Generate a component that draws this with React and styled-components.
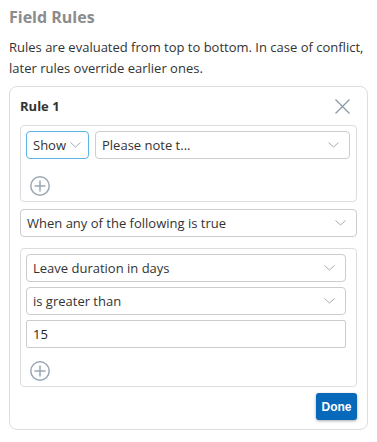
import styled, { createGlobalStyle } from "styled-components";

const GlobalStyle = createGlobalStyle`
  body {
    margin: 0;
    font-family: "Open Sans", "Liberation Sans", sans-serif;
    color: #333;
    background: #fff;
  }
`;

const Page = styled.div`
  padding: 6px 9px 0 9px;
  width: 359px;
`;

const Title = styled.h2`
  margin: 0;
  font-size: 16px;
  line-height: 22px;
  font-weight: 700;
  color: #8c8c8c;
`;

const Description = styled.p`
  margin: 9px 0 0 0;
  font-size: 13px;
  line-height: 21px;
  color: #333;
`;

const Card = styled.section`
  margin-top: 7px;
  border: 1px solid #ddd;
  border-radius: 8px;
  padding: 0 10px 9px 10px;
  display: flex;
  flex-direction: column;
`;

const CardHeader = styled.div`
  height: 38px;
  display: flex;
  align-items: center;
  justify-content: space-between;
`;

const RuleTitle = styled.h3`
  margin: 0;
  font-size: 13px;
  font-weight: 700;
  color: #333;
`;

const CloseButton = styled.button`
  border: none;
  background: none;
  padding: 0;
  margin-right: 7px;
  display: flex;
  cursor: pointer;
`;

const Group = styled.div`
  border: 1px solid #ddd;
  border-radius: 4px;
  padding: 5px ${(p) => (p.$wide ? 10 : 6)}px 5px 5px;
  display: flex;
  flex-direction: column;
  gap: 5px;
  margin-bottom: ${(p) => p.$mb || 0}px;
`;

const Row = styled.div`
  display: flex;
  gap: 6px;
`;

const Select = styled.div`
  height: 28px;
  box-sizing: border-box;
  border: 1px solid ${(p) => (p.$focus ? "#5cb4e4" : "#ccc")};
  border-radius: 4px;
  display: flex;
  align-items: center;
  justify-content: space-between;
  padding: 0 ${(p) => (p.$focus ? 7 : 10)}px 0 6px;
  gap: ${(p) => (p.$focus ? 4 : 6)}px;
  font-size: 13px;
  color: #333;
  flex: ${(p) => (p.$grow ? 1 : "none")};
  background: #fff;
  margin-bottom: ${(p) => p.$mb || 0}px;
`;

const Input = styled.div`
  height: 28px;
  box-sizing: border-box;
  border: 1px solid #ccc;
  border-radius: 2px;
  display: flex;
  align-items: center;
  padding: 0 6px;
  font-size: 13px;
  color: #222;
`;

const AddButton = styled.button`
  border: none;
  background: none;
  padding: 0;
  margin: ${(p) => p.$mt}px 0 0 4px;
  display: flex;
  align-self: flex-start;
  cursor: pointer;
`;

const Footer = styled.div`
  display: flex;
  justify-content: flex-end;
  margin-top: 6px;
`;

const DoneButton = styled.button`
  font-family: "Liberation Sans", Arial, sans-serif;
  font-weight: 700;
  font-size: 12px;
  color: #fff;
  background: #0868ba;
  border: none;
  border-radius: 3px;
  height: 27px;
  width: 41px;
  padding: 0;
  box-shadow: 0 1px 3px rgba(0, 0, 0, 0.35);
`;

const Chevron = () => (
  <svg width="11" height="6" viewBox="0 0 11 6" fill="none">
    <path d="M0.5 0.5L5.5 5L10.5 0.5" stroke="#a3acb5" strokeWidth="1" />
  </svg>
);

const CloseIcon = () => (
  <svg width="15" height="15" viewBox="0 0 15 15" fill="none">
    <path d="M0.5 0.5L14.5 14.5M14.5 0.5L0.5 14.5" stroke="#8a9aa8" strokeWidth="1.3" />
  </svg>
);

const PlusIcon = () => (
  <svg width="20" height="20" viewBox="0 0 20 20" fill="none">
    <circle cx="10" cy="10" r="9.2" stroke="#9aa8b4" strokeWidth="1.5" />
    <path d="M10 4.5V15.5M4.5 10H15.5" stroke="#9aa8b4" strokeWidth="1.5" />
  </svg>
);

export default function App() {
  return (
    <Page>
      <GlobalStyle />
      <Title>Field Rules</Title>
      <Description>
        Rules are evaluated from top to bottom. In case of conflict, later rules
        override earlier ones.
      </Description>
      <Card>
        <CardHeader>
          <RuleTitle>Rule 1</RuleTitle>
          <CloseButton>
            <CloseIcon />
          </CloseButton>
        </CardHeader>
        <Group $mb={7}>
          <Row>
            <Select $focus>
              Show <Chevron />
            </Select>
            <Select $grow>
              Please note t... <Chevron />
            </Select>
          </Row>
          <AddButton $mt={12}>
            <PlusIcon />
          </AddButton>
        </Group>
        <Select $mb={11}>
          When any of the following is true <Chevron />
        </Select>
        <Group $wide>
          <Select>
            Leave duration in days <Chevron />
          </Select>
          <Select>
            is greater than <Chevron />
          </Select>
          <Input>15</Input>
          <AddButton $mt={8}>
            <PlusIcon />
          </AddButton>
        </Group>
        <Footer>
          <DoneButton>Done</DoneButton>
        </Footer>
      </Card>
    </Page>
  );
}
